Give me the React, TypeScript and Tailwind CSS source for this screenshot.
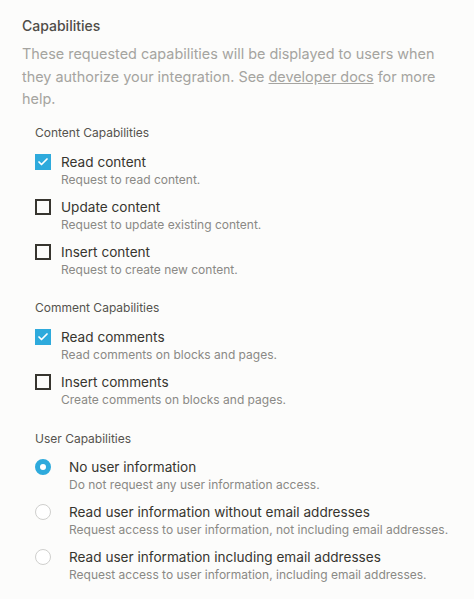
import { Check } from "lucide-react"

const contentCaps = [
  { label: "Read content", desc: "Request to read content.", checked: true },
  { label: "Update content", desc: "Request to update existing content.", checked: false },
  { label: "Insert content", desc: "Request to create new content.", checked: false },
]

const commentCaps = [
  { label: "Read comments", desc: "Read comments on blocks and pages.", checked: true },
  { label: "Insert comments", desc: "Create comments on blocks and pages.", checked: false },
]

const userCaps = [
  { label: "No user information", desc: "Do not request any user information access.", selected: true },
  { label: "Read user information without email addresses", desc: "Request access to user information, not including email addresses.", selected: false },
  { label: "Read user information including email addresses", desc: "Request access to user information, including email addresses.", selected: false },
]

function CheckRow({ label, desc, checked }: { label: string; desc: string; checked: boolean }) {
  return (
    <div className="flex gap-[10px]">
      <div className="pt-[2px]">
        {checked ? (
          <div className="w-4 h-4 bg-[#2eaadc] flex items-center justify-center">
            <Check size={12} strokeWidth={3.5} color="white" />
          </div>
        ) : (
          <div className="w-4 h-4 border-2 border-[#37352f]" />
        )}
      </div>
      <div>
        <div className="text-[13.6px] leading-[20px] text-[#37352f]">{label}</div>
        <div className="text-[12px] leading-[16px] text-[#8a8985]">{desc}</div>
      </div>
    </div>
  )
}

function RadioRow({ label, desc, selected }: { label: string; desc: string; selected: boolean }) {
  return (
    <div className="flex gap-[18px]">
      <div className="pt-[2px]">
        {selected ? (
          <div className="w-4 h-4 rounded-full border-[5px] border-[#2eaadc] bg-white" />
        ) : (
          <div className="w-4 h-4 rounded-full border border-[#cfcfcd] bg-white" />
        )}
      </div>
      <div>
        <div className="text-[13.6px] leading-[20px] text-[#37352f]">{label}</div>
        <div className="text-[12px] leading-[16px] text-[#8a8985]">{desc}</div>
      </div>
    </div>
  )
}

export default function App() {
  return (
    <div
      className="w-[474px] h-[599px] bg-[#fcfcfb] px-[22px] pt-[16px]"
      style={{ fontFamily: "Inter, 'Liberation Sans', sans-serif" }}
    >
      <h2 className="text-[14px] leading-[20px] font-medium text-[#4f4d48]">Capabilities</h2>
      <p className="mt-[7px] text-[14.4px] leading-[22.5px] text-[#a5a4a0]">
        These requested capabilities will be displayed to users when they authorize your integration. See{" "}
        <span className="underline">developer docs</span> for more help.
      </p>

      <div className="pl-[13px] mt-[14px]">
        <div className="text-[12px] leading-[16px] text-[#55534e]">Content Capabilities</div>
        <div className="mt-[11px] flex flex-col gap-[9px]">
          {contentCaps.map((c) => (
            <CheckRow key={c.label} {...c} />
          ))}
        </div>

        <div className="mt-[22px] text-[12px] leading-[16px] text-[#55534e]">Comment Capabilities</div>
        <div className="mt-[11px] flex flex-col gap-[9px]">
          {commentCaps.map((c) => (
            <CheckRow key={c.label} {...c} />
          ))}
        </div>

        <div className="mt-[23px] text-[12px] leading-[16px] text-[#55534e]">User Capabilities</div>
        <div className="mt-[10px] flex flex-col gap-[9px]">
          {userCaps.map((c) => (
            <RadioRow key={c.label} {...c} />
          ))}
        </div>
      </div>
    </div>
  )
}
